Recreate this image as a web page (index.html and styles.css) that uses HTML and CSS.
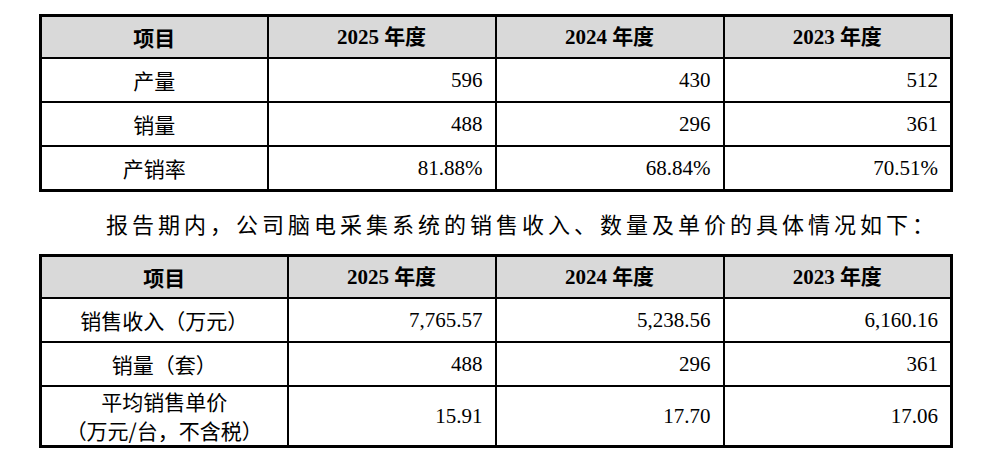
FILE: index.html
```html
<!DOCTYPE html>
<html lang="zh-CN">
<head>
<meta charset="utf-8">
<title>产销情况</title>
<link rel="stylesheet" href="styles.css">
</head>
<body>
<div class="page">
  <table class="data">
    <colgroup>
      <col class="c-a1"><col class="c-b"><col class="c-b"><col class="c-b">
    </colgroup>
    <thead>
      <tr><th class="zh">项目</th><th><span class="yr">2025</span> 年度</th><th><span class="yr">2024</span> 年度</th><th><span class="yr">2023</span> 年度</th></tr>
    </thead>
    <tbody>
      <tr><td class="label">产量</td><td class="num">596</td><td class="num">430</td><td class="num">512</td></tr>
      <tr><td class="label">销量</td><td class="num">488</td><td class="num">296</td><td class="num">361</td></tr>
      <tr><td class="label">产销率</td><td class="num">81.88%</td><td class="num">68.84%</td><td class="num">70.51%</td></tr>
    </tbody>
  </table>

  <p class="para">报告期内，公司脑电采集系统的销售收入、数量及单价的具体情况如下：</p>

  <table class="data">
    <colgroup>
      <col class="c-a2"><col class="c-b2"><col class="c-b"><col class="c-b">
    </colgroup>
    <thead>
      <tr><th class="zh">项目</th><th><span class="yr">2025</span> 年度</th><th><span class="yr">2024</span> 年度</th><th><span class="yr">2023</span> 年度</th></tr>
    </thead>
    <tbody>
      <tr><td class="label">销售收入（万元）</td><td class="num">7,765.57</td><td class="num">5,238.56</td><td class="num">6,160.16</td></tr>
      <tr><td class="label">销量（套）</td><td class="num">488</td><td class="num">296</td><td class="num">361</td></tr>
      <tr class="tall"><td class="label">平均销售单价<br>（万元/台，不含税）</td><td class="num">15.91</td><td class="num">17.70</td><td class="num">17.06</td></tr>
    </tbody>
  </table>
</div>
</body>
</html>
```

FILE: styles.css
```css
html, body {
  margin: 0;
  padding: 0;
  background: #ffffff;
}

body {
  font-family: "Liberation Serif", "Noto Sans CJK SC", serif;
  color: #000000;
}

.page {
  padding: 14px 0 0 39px;
}

.data {
  width: 914px;
  table-layout: fixed;
  border-collapse: collapse;
  border: 3px solid #000;
  font-size: 21px;
}

.c-a1 { width: 227px; }
.c-b { width: 228px; }
.c-a2 { width: 247px; }
.c-b2 { width: 208px; }

.data th,
.data td {
  border: 2px solid #000;
  padding: 0 12px;
  white-space: nowrap;
}

.data th {
  background: #d9d9d9;
  font-weight: bold;
  text-align: center;
  line-height: 40px;
  font-family: "Liberation Serif", "Noto Sans CJK SC", serif;
}

.data th.zh {
  font-family: "Noto Sans CJK SC", sans-serif;
}

.data td {
  line-height: 42px;
}

.label {
  text-align: center;
  font-family: "Noto Sans CJK SC", sans-serif;
}

.num {
  text-align: right;
}

.tall td {
  line-height: 29px;
  padding-top: 0;
  padding-bottom: 0;
}

.para {
  margin: 0;
  padding-left: 67px;
  line-height: 62px;
  font-size: 22px;
  letter-spacing: 4px;
  font-family: "Noto Sans CJK SC", sans-serif;
}
```
